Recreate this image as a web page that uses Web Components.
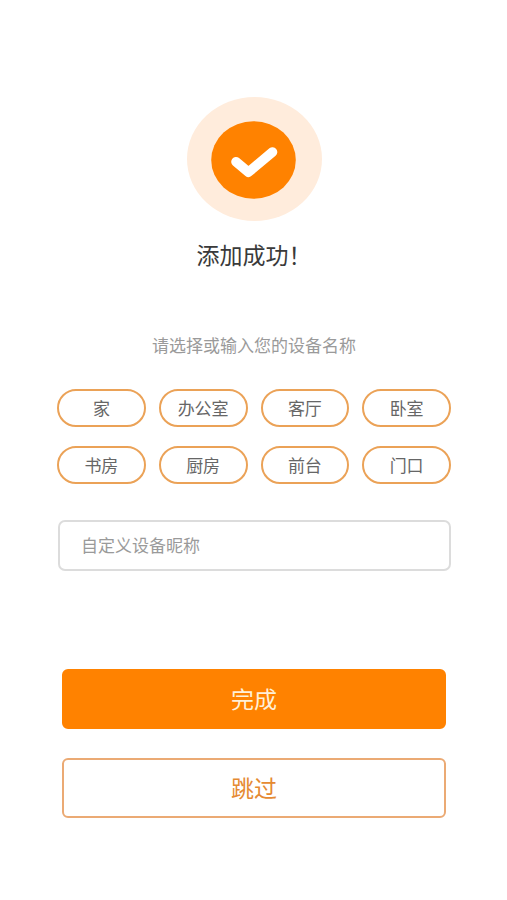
<!DOCTYPE html>
<html lang="zh-CN">
<head>
<meta charset="utf-8">
<meta name="viewport" content="width=device-width, initial-scale=1">
<title>添加成功</title>
<style>
  body { margin: 0; background: #fff; font-family: "Noto Sans CJK SC", sans-serif; color: #333; }
</style>
</head>
<body>
<device-added-page>
  <success-badge slot="badge"></success-badge>
  <span slot="title">添加成功！</span>
  <span slot="hint">请选择或输入您的设备名称</span>
  <name-chip>家</name-chip>
  <name-chip>办公室</name-chip>
  <name-chip>客厅</name-chip>
  <name-chip>卧室</name-chip>
  <name-chip>书房</name-chip>
  <name-chip>厨房</name-chip>
  <name-chip>前台</name-chip>
  <name-chip>门口</name-chip>
  <name-field slot="field" label="自定义设备昵称"></name-field>
  <action-button slot="actions" kind="primary">完成</action-button>
  <action-button slot="actions">跳过</action-button>
</device-added-page>

<template id="page-template">
  <style>
    :host { display: block; }
    main { padding: 97px 56px 82px 57px; }
    h1 { margin: 16px 0 0; font-size: 23px; line-height: 34px; font-weight: 400; text-align: center; color: #3a3a3a; }
    p { margin: 61px 0 0; font-size: 17px; line-height: 26px; text-align: center; color: #9a9a9a; }
    .chips { display: grid; grid-template-columns: repeat(4, 1fr); gap: 19px 13px; margin-top: 31px; }
    .field { margin: 36px 0 0 1px; }
    .actions { display: grid; gap: 29px; margin: 98px 5px 0; }
  </style>
  <main>
    <slot name="badge"></slot>
    <h1><slot name="title"></slot></h1>
    <p id="hint"><slot name="hint"></slot></p>
    <div class="chips" role="group" aria-labelledby="hint"><slot></slot></div>
    <div class="field"><slot name="field"></slot></div>
    <div class="actions"><slot name="actions"></slot></div>
  </main>
</template>

<template id="badge-template">
  <style>
    :host { display: flex; justify-content: center; }
    svg { display: block; width: 135px; height: 124px; }
  </style>
  <svg viewBox="0 0 135 124" aria-hidden="true">
    <ellipse cx="67.5" cy="62" rx="67.5" ry="62" fill="#ffecdc"/>
    <ellipse cx="66.5" cy="63" rx="42.3" ry="38.8" fill="#ff8200"/>
    <path d="M49 64.8 L61.5 75.2 L85.5 55" fill="none" stroke="#fff" stroke-width="9.6" stroke-linecap="round" stroke-linejoin="round"/>
  </svg>
</template>

<template id="chip-template">
  <style>
    :host { display: block; }
    button {
      display: block; box-sizing: border-box; width: 100%; height: 38px; margin: 0; padding: 0;
      border: 2px solid #eba257; border-radius: 19px; background: #fff;
      font: inherit; font-size: 17px; line-height: 26px; color: #666; cursor: pointer;
    }
  </style>
  <button type="button"><slot></slot></button>
</template>

<template id="field-template">
  <style>
    :host { display: block; }
    input {
      display: block; box-sizing: border-box; width: 100%; height: 51px; margin: 0; padding: 0 21px 2px;
      border: 2px solid #dcdcdc; border-radius: 7px; background: #fff;
      font: inherit; font-size: 17px; color: #333;
    }
    input::placeholder { color: #9a9a9a; opacity: 1; }
  </style>
  <input type="text">
</template>

<template id="action-template">
  <style>
    :host { display: block; }
    button {
      display: block; box-sizing: border-box; width: 100%; height: 60px; margin: 0; padding: 0 0 3px;
      border: 2px solid #ebaa74; border-radius: 6px; background: #fff;
      font: inherit; font-size: 23px; line-height: 34px; color: #e58a32; cursor: pointer;
    }
    :host([kind="primary"]) button { border-color: #ff8200; background: #ff8200; color: #fff0d8; }
  </style>
  <button type="button"><slot></slot></button>
</template>

<script>
  class TemplateElement extends HTMLElement {
    constructor() {
      super();
      const template = document.getElementById(this.constructor.templateId);
      this.attachShadow({ mode: "open" }).append(template.content.cloneNode(true));
    }
  }
  class DeviceAddedPage extends TemplateElement { static templateId = "page-template"; }
  class SuccessBadge extends TemplateElement { static templateId = "badge-template"; }
  class NameChip extends TemplateElement { static templateId = "chip-template"; }
  class ActionButton extends TemplateElement { static templateId = "action-template"; }
  class NameField extends TemplateElement {
    static templateId = "field-template";
    connectedCallback() {
      const input = this.shadowRoot.querySelector("input");
      input.placeholder = this.getAttribute("label");
      input.setAttribute("aria-label", this.getAttribute("label"));
    }
  }
  customElements.define("success-badge", SuccessBadge);
  customElements.define("name-chip", NameChip);
  customElements.define("name-field", NameField);
  customElements.define("action-button", ActionButton);
  customElements.define("device-added-page", DeviceAddedPage);

  const page = document.querySelector("device-added-page");
  page.addEventListener("click", (event) => {
    const chip = event.target.closest("name-chip");
    if (chip) page.querySelector("name-field").shadowRoot.querySelector("input").value = chip.textContent;
  });
</script>
</body>
</html>
